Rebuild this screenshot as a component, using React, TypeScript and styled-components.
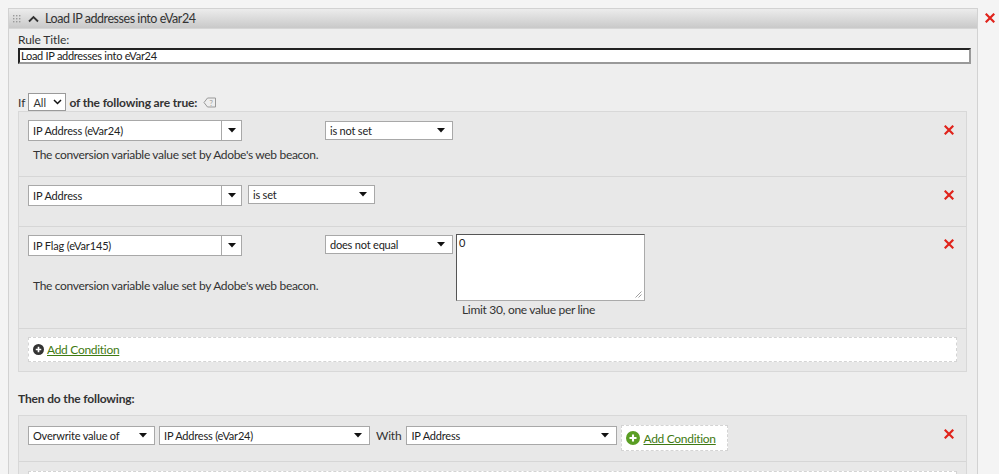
import React from "react";
import styled, { createGlobalStyle } from "styled-components";

const GlobalStyle = createGlobalStyle`
  html, body { margin: 0; padding: 0; }
  body {
    background: #f4f4f4;
    font-family: Lato, "Open Sans", sans-serif;
    color: #333;
    overflow: hidden;
  }
`;

const Page = styled.div`
  display: flex;
  align-items: flex-start;
  gap: 7px;
  padding: 8px 0 0 8px;
  height: 466px;
`;

const Panel = styled.div`
  width: 968px;
  border: 1px solid #d2d2d2;
  background: #eeeeee;
  height: 480px;
`;

const Header = styled.div`
  height: 19px;
  display: flex;
  align-items: center;
  gap: 6px;
  padding-left: 3px;
  background: linear-gradient(#ececec, #c9c9c9);
  border-bottom: 1px solid #d6d6d6;
  font-size: 12.5px;
  color: #333;
`;

const HeaderTitle = styled.span`
  letter-spacing: -0.45px;
`;

const Body = styled.div`
  padding: 4px 6px 0 9px;
`;

const Label = styled.div`
  font-size: 12px;
  line-height: 14px;
  color: #333;
  letter-spacing: -0.1px;
`;

const TitleInput = styled.div`
  height: 12px;
  margin-top: 1px;
  border: 2px solid;
  border-color: #222 #999 #999 #222;
  background: #fff;
  font-size: 11px;
  line-height: 12px;
  padding-left: 1px;
  color: #222;
  letter-spacing: -0.28px;
`;

const IfRow = styled.div`
  display: flex;
  align-items: center;
  gap: 3px;
  margin-top: 29px;
  height: 18px;
  font-size: 12px;
`;

const Bold = styled.span`
  font-weight: 700;
  letter-spacing: -0.15px;
`;

const SmallSelect = styled.div`
  border: 1px solid #9a9a9a;
  background: #fff;
  display: flex;
  align-items: center;
  justify-content: space-between;
  padding: 0 3px 0 4px;
  box-sizing: border-box;
  width: 38px;
  height: 18px;
  font-size: 11px;
`;

const Box = styled.div<{ $mt?: number }>`
  width: 949px;
  margin-top: ${(p) => p.$mt ?? 0}px;
  box-sizing: border-box;
  border: 1px solid #d8d8d8;
  background: #e8e8e8;
`;

const CondRow = styled.div<{ $h: number }>`
  position: relative;
  height: ${(p) => p.$h}px;
  box-sizing: border-box;
  padding: 8px 9px 0 9px;
  border-bottom: 1px solid #d6d6d6;
  display: flex;
  align-items: flex-start;
`;

const FieldCol = styled.div<{ $w?: number }>`
  width: ${(p) => (p.$w ? `${p.$w}px` : "auto")};
  display: flex;
  flex-direction: column;
  flex-shrink: 0;
`;

const Combo = styled.div`
  display: flex;
  height: 21px;
`;

const ComboText = styled.div<{ $w: number }>`
  width: ${(p) => p.$w}px;
  box-sizing: border-box;
  border: 1px solid #a8a8a8;
  background: #fff;
  font-size: 11px;
  line-height: 19px;
  padding-left: 4px;
  color: #222;
  letter-spacing: -0.15px;
`;

const ComboBtn = styled.div`
  width: 20px;
  box-sizing: border-box;
  border: 1px solid #a8a8a8;
  border-left: none;
  background: #fff;
  display: flex;
  align-items: center;
  justify-content: center;
`;

const Select = styled.div<{ $w: number; $mt?: number; $ml?: number }>`
  width: ${(p) => p.$w}px;
  height: 19px;
  margin-top: ${(p) => p.$mt ?? 0}px;
  margin-left: ${(p) => p.$ml ?? 0}px;
  box-sizing: border-box;
  border: 1px solid #a8a8a8;
  background: #fff;
  display: flex;
  align-items: center;
  justify-content: space-between;
  padding: 0 7px 0 4px;
  font-size: 11px;
  color: #222;
  flex-shrink: 0;
  letter-spacing: -0.2px;
`;

const Desc = styled.div<{ $mt: number }>`
  margin-top: ${(p) => p.$mt}px;
  margin-left: 5px;
  font-size: 12px;
  line-height: 14px;
  color: #333;
  white-space: nowrap;
  letter-spacing: -0.32px;
`;

const ValueCol = styled.div`
  display: flex;
  flex-direction: column;
  margin-left: 3px;
  margin-top: -1px;
`;

const TextArea = styled.div`
  width: 189px;
  height: 67px;
  box-sizing: border-box;
  border: 1px solid;
  border-color: #555 #aaa #aaa #555;
  background: #fff;
  font-size: 11px;
  line-height: 13px;
  padding: 1px 2px;
  position: relative;
  color: #222;
`;

const Grip = styled.svg`
  position: absolute;
  right: 2px;
  bottom: 2px;
`;

const Hint = styled.div`
  font-size: 12px;
  line-height: 14px;
  margin: 2px 0 0 6px;
  color: #333;
  letter-spacing: -0.3px;
`;

const RemoveBtn = styled.div<{ $top: number }>`
  position: absolute;
  right: 12px;
  top: ${(p) => p.$top}px;
  display: flex;
`;

const AddWrap = styled.div`
  padding: 8px 9px 9px 9px;
`;

const DashedBox = styled.div<{ $w?: number; $h?: number; $mt?: number }>`
  width: ${(p) => (p.$w ? `${p.$w}px` : "auto")};
  height: ${(p) => p.$h ?? 25}px;
  margin-top: ${(p) => p.$mt ?? 0}px;
  box-sizing: border-box;
  border: 1px dashed #d4d4d4;
  background: #fff;
  display: flex;
  align-items: center;
  gap: 3px;
  padding-left: 4px;
  flex-shrink: 0;
`;

const AddLink = styled.a`
  font-size: 12px;
  color: #3f7a12;
  text-decoration: underline;
  cursor: pointer;
  letter-spacing: -0.3px;
`;

const SectionTitle = styled.div`
  font-size: 12px;
  font-weight: 700;
  margin-top: 20px;
  line-height: 14px;
  color: #333;
  letter-spacing: -0.15px;
`;

const ActionRow = styled.div`
  position: relative;
  height: 46px;
  box-sizing: border-box;
  padding: 10px 9px 0 9px;
  border-bottom: 1px solid #d6d6d6;
  display: flex;
  align-items: flex-start;
  gap: 4px;
`;

const With = styled.span`
  font-size: 12px;
  line-height: 19px;
  margin: 0 1px 0 2px;
  color: #333;
  letter-spacing: -0.2px;
`;

const NextArea = styled.div`
  padding: 9px 9px 0 9px;
`;

const OuterX = styled.div`
  margin-top: 5px;
  display: flex;
`;

const HelpIcon = styled.svg`
  margin-left: 3px;
`;

const Caret = () => (
  <svg width="8" height="5" viewBox="0 0 8 5">
    <path d="M0 0 H8 L4 4.5 Z" fill="#111" />
  </svg>
);

const RedX = () => (
  <svg width="10" height="10" viewBox="0 0 10 10">
    <path d="M1.5 1.5 L8.5 8.5 M8.5 1.5 L1.5 8.5" stroke="#e0231b" strokeWidth="2.2" strokeLinecap="square" />
  </svg>
);

const Chevron = () => (
  <svg width="11" height="8" viewBox="0 0 11 8">
    <path d="M1 6.5 L5.5 2 L10 6.5" stroke="#333" strokeWidth="1.8" fill="none" />
  </svg>
);

const DotsGrip = () => (
  <svg width="10" height="9" viewBox="0 0 10 9">
    {[0, 1, 2].map((r) =>
      [0, 1, 2].map((c) => (
        <rect key={`${r}-${c}`} x={1 + c * 3} y={1 + r * 3} width="1.4" height="1.4" fill="#9a9a9a" />
      ))
    )}
  </svg>
);

const HelpTag = () => (
  <HelpIcon width="14" height="11" viewBox="0 0 14 11">
    <path d="M4.5 1 H12.5 V10 H4.5 L1 5.5 Z" fill="none" stroke="#999" strokeWidth="1" />
    <text x="8.3" y="8.5" fontSize="7.5" textAnchor="middle" fill="#999" fontFamily="Lato, sans-serif">?</text>
  </HelpIcon>
);

const PlusCircle = ({ color, size }: { color: string; size: number }) => (
  <svg width={size} height={size} viewBox="0 0 12 12">
    <circle cx="6" cy="6" r="6" fill={color} />
    <path d="M6 3 V9 M3 6 H9" stroke="#fff" strokeWidth="1.8" />
  </svg>
);

const FieldSelect = ({ label }: { label: string }) => (
  <Combo>
    <ComboText $w={194}>{label}</ComboText>
    <ComboBtn>
      <Caret />
    </ComboBtn>
  </Combo>
);

export default function App() {
  return (
    <>
      <GlobalStyle />
      <Page>
        <Panel>
          <Header>
            <DotsGrip />
            <Chevron />
            <HeaderTitle>Load IP addresses into eVar24</HeaderTitle>
          </Header>
          <Body>
            <Label>Rule Title:</Label>
            <TitleInput>Load IP addresses into eVar24</TitleInput>
            <IfRow>
              <span>If</span>
              <SmallSelect>
                <span>All</span>
                <svg width="9" height="6" viewBox="0 0 9 6">
                  <path d="M1 1 L4.5 4.5 L8 1" stroke="#111" strokeWidth="1.5" fill="none" />
                </svg>
              </SmallSelect>
              <Bold>of the following are true:</Bold>
              <HelpTag />
            </IfRow>
            <Box>
              <CondRow $h={65}>
                <FieldCol $w={297}>
                  <FieldSelect label="IP Address (eVar24)" />
                  <Desc $mt={7}>The conversion variable value set by Adobe's web beacon.</Desc>
                </FieldCol>
                <Select $w={128} $mt={1}>
                  <span>is not set</span>
                  <Caret />
                </Select>
                <RemoveBtn $top={13}>
                  <RedX />
                </RemoveBtn>
              </CondRow>
              <CondRow $h={50}>
                <FieldCol>
                  <FieldSelect label="IP Address" />
                </FieldCol>
                <Select $w={127} $ml={6}>
                  <span>is set</span>
                  <Caret />
                </Select>
                <RemoveBtn $top={13}>
                  <RedX />
                </RemoveBtn>
              </CondRow>
              <CondRow $h={102}>
                <FieldCol $w={297}>
                  <FieldSelect label="IP Flag (eVar145)" />
                  <Desc $mt={23}>The conversion variable value set by Adobe's web beacon.</Desc>
                </FieldCol>
                <Select $w={128}>
                  <span>does not equal</span>
                  <Caret />
                </Select>
                <ValueCol>
                  <TextArea>
                    0
                    <Grip width="7" height="7" viewBox="0 0 7 7">
                      <path d="M6.5 0.5 L0.5 6.5 M6.5 3.5 L3.5 6.5" stroke="#888" strokeWidth="0.8" />
                    </Grip>
                  </TextArea>
                  <Hint>Limit 30, one value per line</Hint>
                </ValueCol>
                <RemoveBtn $top={12}>
                  <RedX />
                </RemoveBtn>
              </CondRow>
              <AddWrap>
                <DashedBox>
                  <PlusCircle color="#333" size={11} />
                  <AddLink>Add Condition</AddLink>
                </DashedBox>
              </AddWrap>
            </Box>
            <SectionTitle>Then do the following:</SectionTitle>
            <Box $mt={9}>
              <ActionRow>
                <Select $w={127}>
                  <span>Overwrite value of</span>
                  <Caret />
                </Select>
                <Select $w={211}>
                  <span>IP Address (eVar24)</span>
                  <Caret />
                </Select>
                <With>With</With>
                <Select $w={211}>
                  <span>IP Address</span>
                  <Caret />
                </Select>
                <DashedBox $w={107} $h={26} $mt={-1}>
                  <PlusCircle color="#5a9e24" size={14} />
                  <AddLink>Add Condition</AddLink>
                </DashedBox>
                <RemoveBtn $top={13}>
                  <RedX />
                </RemoveBtn>
              </ActionRow>
              <NextArea>
                <DashedBox $h={30} />
              </NextArea>
            </Box>
          </Body>
        </Panel>
        <OuterX>
          <RedX />
        </OuterX>
      </Page>
    </>
  );
}
